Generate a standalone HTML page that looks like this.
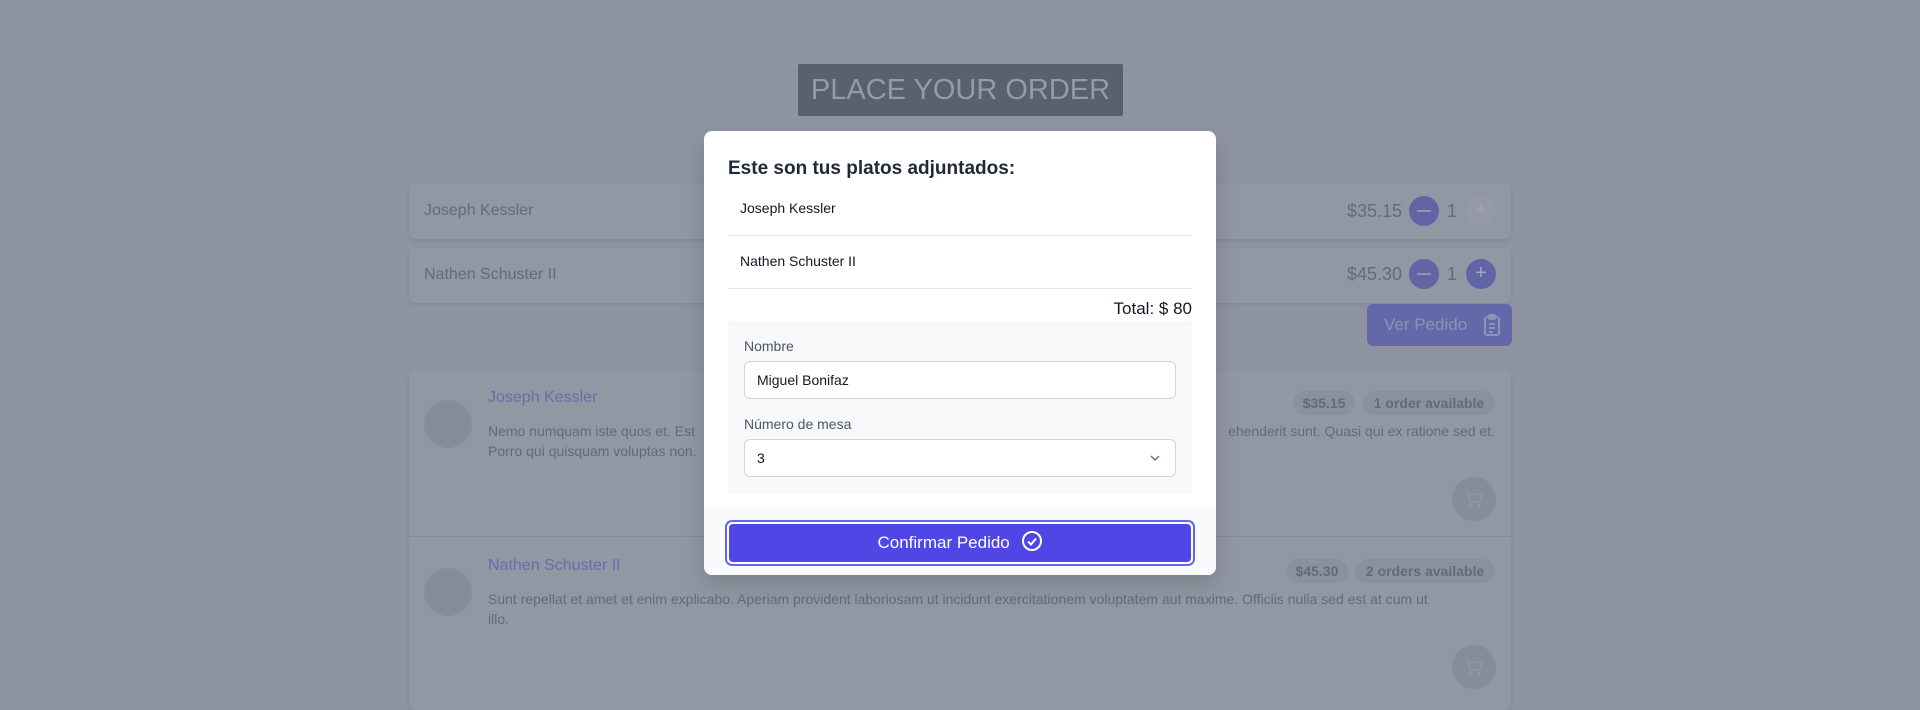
<!DOCTYPE html>
<html><head><meta charset="utf-8"><style>
*{box-sizing:border-box;margin:0;padding:0}
body{width:1920px;height:705px;overflow:hidden;background:#8e94a0;font-family:"Liberation Sans",sans-serif;position:relative}
.abs{position:absolute;white-space:nowrap}
.card{background:#9197a3;border-radius:6px;box-shadow:0 2px 4px rgba(0,0,0,.08)}
.t{color:#646a78}
.circ{position:absolute;border-radius:50%}
</style></head><body>
<div class="abs" style="left:798px;top:64px;width:325px;height:52px;background:#5a606d;border-radius:2px;color:#959aa6;font-size:29px;text-align:center;line-height:52px">PLACE YOUR ORDER</div>

<div class="abs card" style="left:409px;top:184px;width:1102px;height:55px"></div>
<div class="abs t" style="left:424px;top:202px;font-size:16px">Joseph Kessler</div>
<div class="abs card" style="left:409px;top:248px;width:1102px;height:55px"></div>
<div class="abs t" style="left:424px;top:266px;font-size:16px">Nathen Schuster II</div>

<div class="abs t" style="left:1347px;top:201px;font-size:18px">$35.15</div>
<div class="circ" style="left:1409px;top:196px;width:30px;height:30px;background:#6165a6"></div>
<div class="abs" style="left:1417px;top:210px;width:14px;height:2px;background:#8e94a0"></div>
<div class="abs t" style="left:1447px;top:201px;font-size:18px">1</div>
<div class="circ" style="left:1466px;top:196px;width:30px;height:30px;background:#959aa6;color:#a0a5b0;text-align:center;line-height:29px;font-size:20px">+</div>
<div class="abs t" style="left:1347px;top:264px;font-size:18px">$45.30</div>
<div class="circ" style="left:1409px;top:259px;width:30px;height:30px;background:#6165a6"></div>
<div class="abs" style="left:1417px;top:273px;width:14px;height:2px;background:#8e94a0"></div>
<div class="abs t" style="left:1447px;top:264px;font-size:18px">1</div>
<div class="circ" style="left:1466px;top:259px;width:30px;height:30px;background:#6165a6;color:#a3a8c8;text-align:center;line-height:29px;font-size:20px">+</div>

<div class="abs" style="left:1367px;top:304px;width:145px;height:42px;background:#6467a8;border-radius:6px;color:#8e93b8;font-size:17px;line-height:42px;padding-left:17px">Ver Pedido
<svg class="abs" style="left:116px;top:10px" width="18" height="22" viewBox="0 0 18 22" fill="none" stroke="#8e93b8" stroke-width="2"><rect x="2" y="3" width="14" height="18" rx="2"/><rect x="6" y="1" width="6" height="4" rx="1"/><path d="M6 10h6M6 14h6M6 18h4"/></svg></div>

<div class="abs card" style="left:409px;top:370px;width:1102px;height:340px;border-radius:6px"></div>
<div class="abs" style="left:409px;top:536px;width:1102px;height:1px;background:#868c98"></div>
<div class="circ" style="left:424px;top:400px;width:48px;height:48px;background:#868c99"></div>
<div class="abs" style="left:488px;top:389px;font-size:16px;color:#6a6ea8">Joseph Kessler</div>
<div class="abs t" style="left:488px;top:421px;font-size:14px;line-height:20px">Nemo numquam iste quos et. Est</div>
<div class="abs t" style="left:488px;top:441px;font-size:14px;line-height:20px">Porro qui quisquam voluptas non.</div>
<div class="abs t" style="right:425px;top:421px;font-size:14px;line-height:20px">ehenderit sunt. Quasi qui ex ratione sed et.</div>
<div class="abs t" style="left:1293px;top:391px;width:62px;height:24px;background:#8a909c;border-radius:12px;font-size:14px;text-align:center;line-height:24px;font-weight:bold">$35.15</div>
<div class="abs t" style="left:1363px;top:391px;width:132px;height:24px;background:#8a909c;border-radius:12px;font-size:14px;text-align:center;line-height:24px;font-weight:bold">1 order available</div>
<div class="circ" style="left:1452px;top:477px;width:44px;height:44px;background:#868c99"></div>
<svg class="abs" style="left:1463px;top:488px" width="22" height="22" viewBox="0 0 24 24" fill="none" stroke="#8f95a1" stroke-width="2"><path d="M2 3h3l2.5 12h11L21 7H6"/><circle cx="9" cy="19" r="1.5"/><circle cx="17" cy="19" r="1.5"/></svg>

<div class="circ" style="left:424px;top:568px;width:48px;height:48px;background:#868c99"></div>
<div class="abs" style="left:488px;top:557px;font-size:16px;color:#6a6ea8">Nathen Schuster II</div>
<div class="abs t" style="left:488px;top:589px;font-size:14px;line-height:20px">Sunt repellat et amet et enim explicabo. Aperiam provident laboriosam ut incidunt exercitationem voluptatem aut maxime. Officiis nulla sed est at cum ut</div>
<div class="abs t" style="left:488px;top:609px;font-size:14px;line-height:20px">illo.</div>
<div class="abs t" style="left:1286px;top:559px;width:62px;height:24px;background:#8a909c;border-radius:12px;font-size:14px;text-align:center;line-height:24px;font-weight:bold">$45.30</div>
<div class="abs t" style="left:1355px;top:559px;width:140px;height:24px;background:#8a909c;border-radius:12px;font-size:14px;text-align:center;line-height:24px;font-weight:bold">2 orders available</div>
<div class="circ" style="left:1452px;top:645px;width:44px;height:44px;background:#868c99"></div>
<svg class="abs" style="left:1463px;top:656px" width="22" height="22" viewBox="0 0 24 24" fill="none" stroke="#8f95a1" stroke-width="2"><path d="M2 3h3l2.5 12h11L21 7H6"/><circle cx="9" cy="19" r="1.5"/><circle cx="17" cy="19" r="1.5"/></svg>

<!-- modal -->
<div class="abs" style="left:704px;top:131px;width:512px;height:444px;background:#fff;border-radius:8px;overflow:hidden;box-shadow:0 10px 25px rgba(0,0,0,.15)">
  <div class="abs" style="left:24px;top:27px;font-size:19px;font-weight:bold;color:#1f2937">Este son tus platos adjuntados:</div>
  <div class="abs" style="left:36px;top:69px;font-size:14px;color:#111827">Joseph Kessler</div>
  <div class="abs" style="left:24px;top:104px;width:464px;height:1px;background:#e5e7eb"></div>
  <div class="abs" style="left:36px;top:122px;font-size:14px;color:#111827">Nathen Schuster II</div>
  <div class="abs" style="left:24px;top:157px;width:464px;height:1px;background:#e5e7eb"></div>
  <div class="abs" style="right:24px;top:168px;font-size:17px;color:#111827">Total: $ 80</div>
  <div class="abs" style="left:24px;top:190px;width:464px;height:172px;background:#f8f9fb"></div>
  <div class="abs" style="left:40px;top:207px;font-size:14px;color:#4b5563">Nombre</div>
  <div class="abs" style="left:40px;top:230px;width:432px;height:38px;background:#fff;border:1px solid #d1d5db;border-radius:6px;font-size:14px;color:#111827;line-height:36px;padding-left:12px">Miguel Bonifaz</div>
  <div class="abs" style="left:40px;top:285px;font-size:14px;color:#4b5563">Número de mesa</div>
  <div class="abs" style="left:40px;top:308px;width:432px;height:38px;background:#fff;border:1px solid #d1d5db;border-radius:6px;font-size:14px;color:#111827;line-height:36px;padding-left:12px">3
    <svg class="abs" style="left:404px;top:13px" width="12" height="10" viewBox="0 0 12 10" fill="none" stroke="#6b7280" stroke-width="1.5"><path d="M2 3l4 4 4-4"/></svg></div>
  <div class="abs" style="left:0;top:377px;width:512px;height:67px;background:#f9fafb"></div>
  <div class="abs" style="left:21px;top:389px;width:470px;height:46px;border:2px solid #6366f1;border-radius:7px;padding:2px;background:#fff">
    <div style="width:100%;height:100%;background:#4f46e5;border-radius:4px;color:#fff;font-size:17px;text-align:center;line-height:38px">Confirmar Pedido <svg style="vertical-align:-4px;margin-left:6px" width="22" height="22" viewBox="0 0 22 22" fill="none" stroke="#fff" stroke-width="2"><circle cx="11" cy="11" r="9"/><path d="M7 11.5l3 3 5-6"/></svg></div>
  </div>
</div>
</body></html>
